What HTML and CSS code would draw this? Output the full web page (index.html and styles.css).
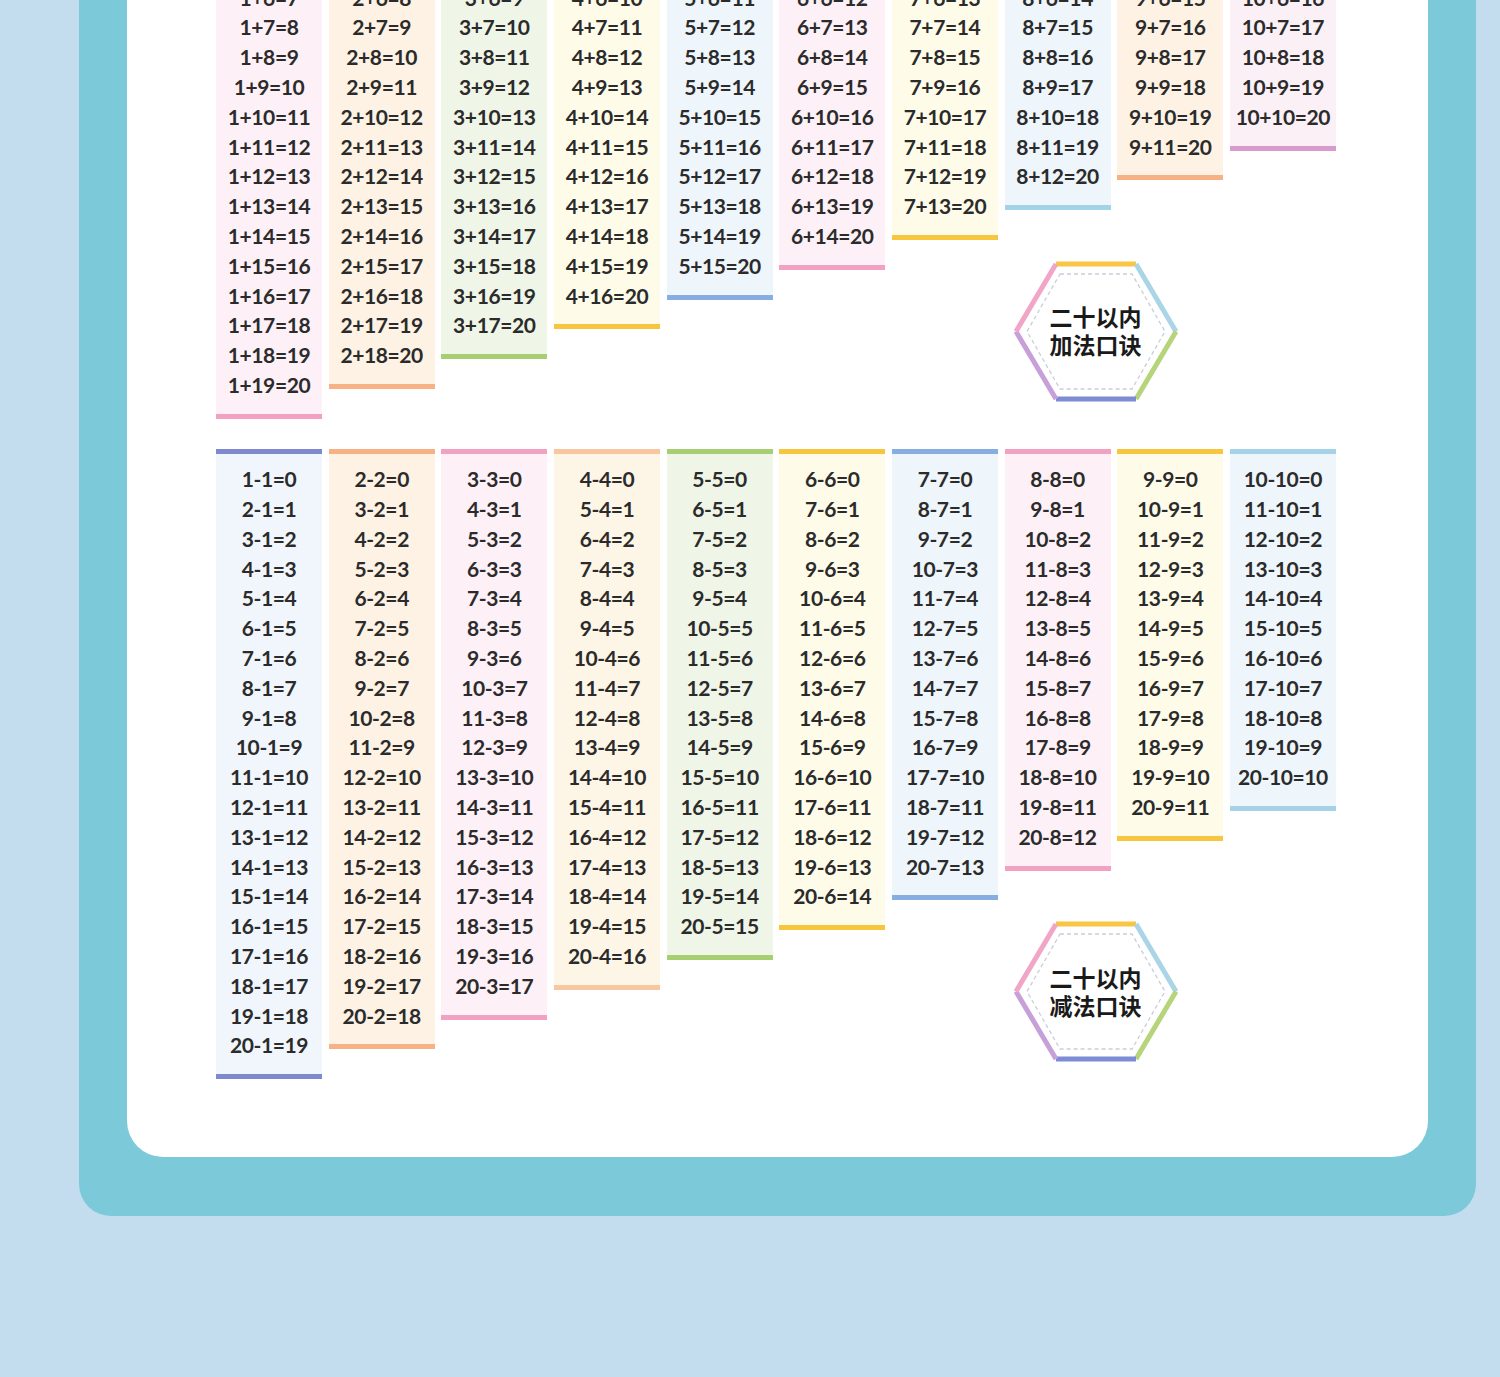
FILE: index.html
```html
<!DOCTYPE html>
<html lang="zh-CN">
<head>
<meta charset="utf-8">
<title>二十以内加减法口诀</title>
<link rel="stylesheet" href="styles.css">
</head>
<body>
<div class="frame">
  <div class="panel">
    <div class="table add">
      <div class="col c-pink"><p>1+1=2</p><p>1+2=3</p><p>1+3=4</p><p>1+4=5</p><p>1+5=6</p><p>1+6=7</p><p>1+7=8</p><p>1+8=9</p><p>1+9=10</p><p>1+10=11</p><p>1+11=12</p><p>1+12=13</p><p>1+13=14</p><p>1+14=15</p><p>1+15=16</p><p>1+16=17</p><p>1+17=18</p><p>1+18=19</p><p>1+19=20</p></div>
      <div class="col c-orange"><p>2+1=3</p><p>2+2=4</p><p>2+3=5</p><p>2+4=6</p><p>2+5=7</p><p>2+6=8</p><p>2+7=9</p><p>2+8=10</p><p>2+9=11</p><p>2+10=12</p><p>2+11=13</p><p>2+12=14</p><p>2+13=15</p><p>2+14=16</p><p>2+15=17</p><p>2+16=18</p><p>2+17=19</p><p>2+18=20</p></div>
      <div class="col c-green"><p>3+1=4</p><p>3+2=5</p><p>3+3=6</p><p>3+4=7</p><p>3+5=8</p><p>3+6=9</p><p>3+7=10</p><p>3+8=11</p><p>3+9=12</p><p>3+10=13</p><p>3+11=14</p><p>3+12=15</p><p>3+13=16</p><p>3+14=17</p><p>3+15=18</p><p>3+16=19</p><p>3+17=20</p></div>
      <div class="col c-yellow"><p>4+1=5</p><p>4+2=6</p><p>4+3=7</p><p>4+4=8</p><p>4+5=9</p><p>4+6=10</p><p>4+7=11</p><p>4+8=12</p><p>4+9=13</p><p>4+10=14</p><p>4+11=15</p><p>4+12=16</p><p>4+13=17</p><p>4+14=18</p><p>4+15=19</p><p>4+16=20</p></div>
      <div class="col c-blue"><p>5+1=6</p><p>5+2=7</p><p>5+3=8</p><p>5+4=9</p><p>5+5=10</p><p>5+6=11</p><p>5+7=12</p><p>5+8=13</p><p>5+9=14</p><p>5+10=15</p><p>5+11=16</p><p>5+12=17</p><p>5+13=18</p><p>5+14=19</p><p>5+15=20</p></div>
      <div class="col c-pink"><p>6+1=7</p><p>6+2=8</p><p>6+3=9</p><p>6+4=10</p><p>6+5=11</p><p>6+6=12</p><p>6+7=13</p><p>6+8=14</p><p>6+9=15</p><p>6+10=16</p><p>6+11=17</p><p>6+12=18</p><p>6+13=19</p><p>6+14=20</p></div>
      <div class="col c-yellow"><p>7+1=8</p><p>7+2=9</p><p>7+3=10</p><p>7+4=11</p><p>7+5=12</p><p>7+6=13</p><p>7+7=14</p><p>7+8=15</p><p>7+9=16</p><p>7+10=17</p><p>7+11=18</p><p>7+12=19</p><p>7+13=20</p></div>
      <div class="col c-sky"><p>8+1=9</p><p>8+2=10</p><p>8+3=11</p><p>8+4=12</p><p>8+5=13</p><p>8+6=14</p><p>8+7=15</p><p>8+8=16</p><p>8+9=17</p><p>8+10=18</p><p>8+11=19</p><p>8+12=20</p></div>
      <div class="col c-orange"><p>9+1=10</p><p>9+2=11</p><p>9+3=12</p><p>9+4=13</p><p>9+5=14</p><p>9+6=15</p><p>9+7=16</p><p>9+8=17</p><p>9+9=18</p><p>9+10=19</p><p>9+11=20</p></div>
      <div class="col c-violet"><p>10+1=11</p><p>10+2=12</p><p>10+3=13</p><p>10+4=14</p><p>10+5=15</p><p>10+6=16</p><p>10+7=17</p><p>10+8=18</p><p>10+9=19</p><p>10+10=20</p></div>
      <div class="hex">
        <svg class="hex-art" viewBox="0 0 160 135" width="160" height="135" aria-hidden="true">
          <polygon points="44,10 116,10 149,67.5 116,125 44,125 11,67.5" fill="#fff" stroke="#c9ced8" stroke-width="1.3" stroke-dasharray="4 3"/>
          <line x1="40" y1="0" x2="120" y2="0" stroke="#f8c644" stroke-width="5"/>
          <line x1="120" y1="0" x2="160" y2="67.5" stroke="#a9d5e7" stroke-width="5"/>
          <line x1="160" y1="67.5" x2="120" y2="135" stroke="#b6d47a" stroke-width="5"/>
          <line x1="120" y1="135" x2="40" y2="135" stroke="#7d8cd4" stroke-width="5"/>
          <line x1="40" y1="135" x2="0" y2="67.5" stroke="#c8a0d9" stroke-width="5"/>
          <line x1="0" y1="67.5" x2="40" y2="0" stroke="#f1a6c8" stroke-width="5"/>
        </svg>
        <div class="hex-text"><span>二十以内</span><span>加法口诀</span></div>
      </div>
    </div>

    <div class="table sub">
      <div class="col c-indigo"><p>1-1=0</p><p>2-1=1</p><p>3-1=2</p><p>4-1=3</p><p>5-1=4</p><p>6-1=5</p><p>7-1=6</p><p>8-1=7</p><p>9-1=8</p><p>10-1=9</p><p>11-1=10</p><p>12-1=11</p><p>13-1=12</p><p>14-1=13</p><p>15-1=14</p><p>16-1=15</p><p>17-1=16</p><p>18-1=17</p><p>19-1=18</p><p>20-1=19</p></div>
      <div class="col c-orange"><p>2-2=0</p><p>3-2=1</p><p>4-2=2</p><p>5-2=3</p><p>6-2=4</p><p>7-2=5</p><p>8-2=6</p><p>9-2=7</p><p>10-2=8</p><p>11-2=9</p><p>12-2=10</p><p>13-2=11</p><p>14-2=12</p><p>15-2=13</p><p>16-2=14</p><p>17-2=15</p><p>18-2=16</p><p>19-2=17</p><p>20-2=18</p></div>
      <div class="col c-pink"><p>3-3=0</p><p>4-3=1</p><p>5-3=2</p><p>6-3=3</p><p>7-3=4</p><p>8-3=5</p><p>9-3=6</p><p>10-3=7</p><p>11-3=8</p><p>12-3=9</p><p>13-3=10</p><p>14-3=11</p><p>15-3=12</p><p>16-3=13</p><p>17-3=14</p><p>18-3=15</p><p>19-3=16</p><p>20-3=17</p></div>
      <div class="col c-apricot"><p>4-4=0</p><p>5-4=1</p><p>6-4=2</p><p>7-4=3</p><p>8-4=4</p><p>9-4=5</p><p>10-4=6</p><p>11-4=7</p><p>12-4=8</p><p>13-4=9</p><p>14-4=10</p><p>15-4=11</p><p>16-4=12</p><p>17-4=13</p><p>18-4=14</p><p>19-4=15</p><p>20-4=16</p></div>
      <div class="col c-green"><p>5-5=0</p><p>6-5=1</p><p>7-5=2</p><p>8-5=3</p><p>9-5=4</p><p>10-5=5</p><p>11-5=6</p><p>12-5=7</p><p>13-5=8</p><p>14-5=9</p><p>15-5=10</p><p>16-5=11</p><p>17-5=12</p><p>18-5=13</p><p>19-5=14</p><p>20-5=15</p></div>
      <div class="col c-yellow"><p>6-6=0</p><p>7-6=1</p><p>8-6=2</p><p>9-6=3</p><p>10-6=4</p><p>11-6=5</p><p>12-6=6</p><p>13-6=7</p><p>14-6=8</p><p>15-6=9</p><p>16-6=10</p><p>17-6=11</p><p>18-6=12</p><p>19-6=13</p><p>20-6=14</p></div>
      <div class="col c-blue"><p>7-7=0</p><p>8-7=1</p><p>9-7=2</p><p>10-7=3</p><p>11-7=4</p><p>12-7=5</p><p>13-7=6</p><p>14-7=7</p><p>15-7=8</p><p>16-7=9</p><p>17-7=10</p><p>18-7=11</p><p>19-7=12</p><p>20-7=13</p></div>
      <div class="col c-pink"><p>8-8=0</p><p>9-8=1</p><p>10-8=2</p><p>11-8=3</p><p>12-8=4</p><p>13-8=5</p><p>14-8=6</p><p>15-8=7</p><p>16-8=8</p><p>17-8=9</p><p>18-8=10</p><p>19-8=11</p><p>20-8=12</p></div>
      <div class="col c-yellow"><p>9-9=0</p><p>10-9=1</p><p>11-9=2</p><p>12-9=3</p><p>13-9=4</p><p>14-9=5</p><p>15-9=6</p><p>16-9=7</p><p>17-9=8</p><p>18-9=9</p><p>19-9=10</p><p>20-9=11</p></div>
      <div class="col c-sky"><p>10-10=0</p><p>11-10=1</p><p>12-10=2</p><p>13-10=3</p><p>14-10=4</p><p>15-10=5</p><p>16-10=6</p><p>17-10=7</p><p>18-10=8</p><p>19-10=9</p><p>20-10=10</p></div>
      <div class="hex">
        <svg class="hex-art" viewBox="0 0 160 135" width="160" height="135" aria-hidden="true">
          <polygon points="44,10 116,10 149,67.5 116,125 44,125 11,67.5" fill="#fff" stroke="#c9ced8" stroke-width="1.3" stroke-dasharray="4 3"/>
          <line x1="40" y1="0" x2="120" y2="0" stroke="#f8c644" stroke-width="5"/>
          <line x1="120" y1="0" x2="160" y2="67.5" stroke="#a9d5e7" stroke-width="5"/>
          <line x1="160" y1="67.5" x2="120" y2="135" stroke="#b6d47a" stroke-width="5"/>
          <line x1="120" y1="135" x2="40" y2="135" stroke="#7d8cd4" stroke-width="5"/>
          <line x1="40" y1="135" x2="0" y2="67.5" stroke="#c8a0d9" stroke-width="5"/>
          <line x1="0" y1="67.5" x2="40" y2="0" stroke="#f1a6c8" stroke-width="5"/>
        </svg>
        <div class="hex-text"><span>二十以内</span><span>减法口诀</span></div>
      </div>
    </div>
  </div>
</div>
</body>
</html>
```

FILE: styles.css
```css
html {
  background: #c3ddef;
}
body {
  margin: 0;
  background: #c3ddef;
  font-family: "Lato", "DejaVu Sans", sans-serif;
  color: #2b2b2b;
  min-height: 1377px;
  overflow: hidden;
}
.frame {
  box-sizing: border-box;
  width: 1397px;
  margin: -260px 0 0 79px;
  padding: 20px 48px 59px 48px;
  background: #7ccad9;
  border-radius: 0 0 32px 32px;
}
.panel {
  background: #ffffff;
  border-radius: 0 0 36px 36px;
  padding: 73.6px 92px 78px 89px;
}
.table {
  display: grid;
  grid-template-columns: repeat(10, 106px);
  column-gap: 6.67px;
  align-items: start;
}
.sub {
  margin-top: 30.5px;
}
.col {
  grid-row: 1;
  text-align: center;
  padding-bottom: 14px;
  border-bottom-width: 5px;
  border-bottom-style: solid;
}
.col:nth-child(1) { grid-column: 1; }
.col:nth-child(2) { grid-column: 2; }
.col:nth-child(3) { grid-column: 3; }
.col:nth-child(4) { grid-column: 4; }
.col:nth-child(5) { grid-column: 5; }
.col:nth-child(6) { grid-column: 6; }
.col:nth-child(7) { grid-column: 7; }
.col:nth-child(8) { grid-column: 8; }
.col:nth-child(9) { grid-column: 9; }
.col:nth-child(10) { grid-column: 10; }
.sub .col {
  border-top-width: 5px;
  border-top-style: solid;
  padding-top: 10px;
}
.col p {
  margin: 0;
  font-size: 21px;
  font-weight: 700;
  line-height: 29.8px;
  height: 29.8px;
  letter-spacing: -0.4px;
  white-space: nowrap;
}
.c-pink    { background: #fdf0f6; border-color: #f2a1c3; }
.c-orange  { background: #fdf2e4; border-color: #f6b184; }
.c-green   { background: #eff5e7; border-color: #a8ce72; }
.c-yellow  { background: #fefce9; border-color: #f8c63e; }
.c-blue    { background: #eef5fb; border-color: #87aee0; }
.c-sky     { background: #eef5fb; border-color: #a4d2e6; }
.c-violet  { background: #fcf0f7; border-color: #d99bce; }
.c-indigo  { background: #f1f6fc; border-color: #7f89cf; }
.c-apricot { background: #fdf5e6; border-color: #f8c7a0; }

.hex {
  grid-row: 1;
  grid-column: 8 / 11;
  align-self: end;
  justify-self: start;
  margin: 0 0 20px 11px;
  width: 160px;
  height: 135px;
  display: grid;
  place-items: center;
}
.hex-art {
  grid-area: 1 / 1;
  overflow: visible;
  display: block;
}
.hex-text {
  grid-area: 1 / 1;
  display: flex;
  flex-direction: column;
  align-items: center;
  font-family: "Noto Sans CJK SC", "Noto Sans", sans-serif;
  font-weight: 700;
  font-size: 23px;
  line-height: 28px;
  color: #1a1a1a;
  margin-top: -2px;
}
.hex-text span {
  display: block;
  height: 28px;
}
```
